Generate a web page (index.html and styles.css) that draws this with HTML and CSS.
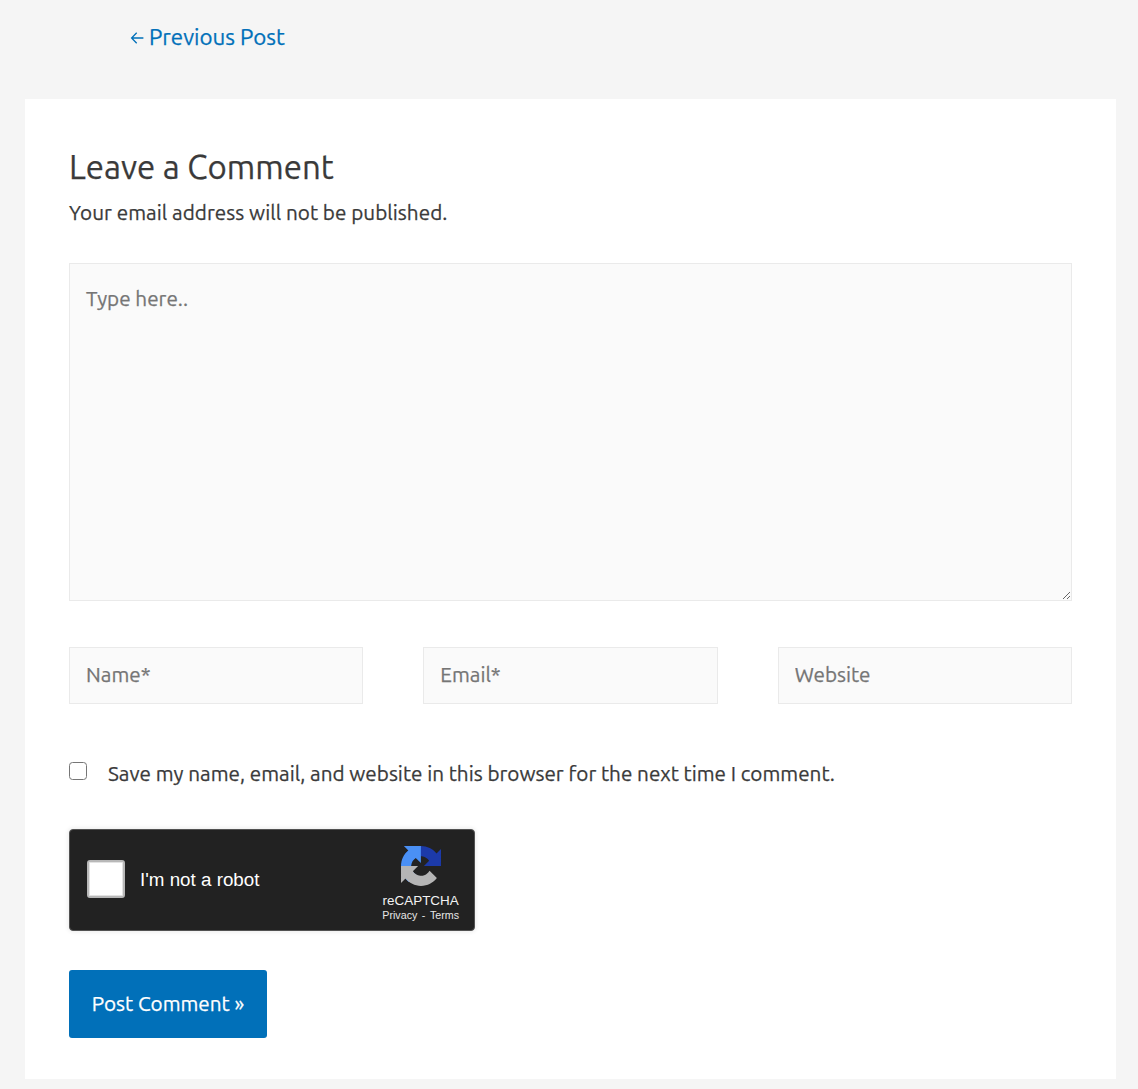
FILE: index.html
```html
<!DOCTYPE html>
<html lang="en">
<head>
<meta charset="utf-8">
<title>Leave a Comment</title>
<link rel="stylesheet" href="styles.css">
</head>
<body>
<nav class="post-nav">
  <a class="prev-link" href="#">
    <svg class="arrow" viewBox="0 0 14 14" width="14" height="14"><path d="M13.4 7H1.8M6.7 1.8 1.6 7l5.1 5.2" fill="none" stroke="currentColor" stroke-width="1.3"/></svg>
    <span class="prev-text">Previous Post</span>
  </a>
</nav>
<main class="respond">
  <h3 class="title">Leave a Comment</h3>
  <p class="notes"><span class="notes-text">Your email address will not be published.</span></p>
  <form class="comment-form">
    <textarea class="field message" placeholder="Type here.."></textarea>
    <div class="author-fields">
      <input class="field name" type="text" placeholder="Name*">
      <input class="field email" type="text" placeholder="Email*">
      <input class="field website" type="text" placeholder="Website">
    </div>
    <label class="consent">
      <input class="consent-box" type="checkbox">
      <span class="consent-text">Save my name, email, and website in this browser for the next time I comment.</span>
    </label>
    <div class="captcha">
      <span class="captcha-box"></span>
      <span class="captcha-label">I'm not a robot</span>
      <div class="captcha-brand">
        <svg class="captcha-logo" viewBox="0 0 64 64" width="40" height="40">
          <path fill="#1c3aa9" d="M64 31.955l-.033-1.37V4.687l-7.16 7.16C50.948 4.674 42.033.093 32.05.093c-10.4 0-19.622 4.96-25.458 12.64l11.736 11.86a15.55 15.55 0 0 1 4.754-5.334c2.05-1.6 4.952-2.906 8.968-2.906.485 0 .86.057 1.135.163 4.976.393 9.288 3.14 11.828 7.124l-8.307 8.307L64 31.953"/>
          <path fill="#4a90f5" d="M31.862.094l-1.37.033H4.594l7.16 7.16C4.58 13.147 0 22.06 0 32.046c0 10.4 4.96 19.622 12.64 25.458L24.5 45.768a15.55 15.55 0 0 1-5.334-4.754c-1.6-2.05-2.906-4.952-2.906-8.968 0-.485.057-.86.163-1.135.393-4.976 3.14-9.288 7.124-11.828l8.307 8.307L31.86.095"/>
          <path fill="#b5b5b5" d="M.001 32.045l.033 1.37v25.898l7.16-7.16c5.86 7.173 14.774 11.754 24.76 11.754 10.4 0 19.622-4.96 25.458-12.64l-11.736-11.86a15.55 15.55 0 0 1-4.754 5.334c-2.05 1.6-4.952 2.906-8.968 2.906-.485 0-.86-.057-1.135-.163-4.976-.393-9.288-3.14-11.828-7.124l8.307-8.307c-10.522.04-22.4.066-27.295-.005"/>
        </svg>
        <span class="brand-name">reCAPTCHA</span>
        <span class="brand-links"><span>Privacy</span><span>-</span><span>Terms</span></span>
      </div>
    </div>
    <button class="submit" type="button"><span>Post Comment »</span></button>
  </form>
</main>
</body>
</html>
```

FILE: styles.css
```css
* { box-sizing: border-box; }
body {
  margin: 0;
  height: 1089px;
  overflow: hidden;
  background: #f5f5f5;
  color: #3a3a3a;
  font: 20.7px/30px Ubuntu, "Noto Sans", sans-serif;
  -webkit-text-stroke-width: .25px;
}
.post-nav { height: 99px; padding: 20px 0 0 130px; }
.prev-link {
  display: inline-flex;
  align-items: center;
  gap: 5px;
  height: 34px;
  color: #0170b9;
  font-size: 22.35px;
  text-decoration: none;
  white-space: nowrap;
}
.arrow { margin-top: 1px; }
.respond {
  width: 1091px;
  height: 980px;
  margin-left: 25px;
  padding: 46px 44px 0;
  background: #fff;
}
.title { margin: 0; height: 44px; font-size: 33px; line-height: 44px; font-weight: 400; white-space: nowrap; }
.notes { margin: 9px 0 0; height: 30px; letter-spacing: .035px; white-space: nowrap; }
.comment-form { display: flex; flex-direction: column; align-items: flex-start; padding-top: 35px; }
.field {
  display: block;
  border: 1px solid #eaeaea;
  background: #fafafa;
  color: #666;
  font: inherit;
  outline: none;
}
.field::placeholder { color: #757575; opacity: 1; }
.message { width: 1003px; height: 338px; padding: 20px 16px; resize: vertical; -webkit-text-stroke-width: .25px; }
.author-fields {
  display: grid;
  grid-template-columns: repeat(3, 1fr);
  gap: 60px;
  width: 1003px;
  margin-top: 46px;
}
.author-fields .field { width: 100%; height: 57px; padding: 0 16px 3px; }
.consent { display: flex; height: 30px; margin-top: 55px; white-space: nowrap; }
.consent-box {
  width: 18px;
  height: 18px;
  margin: 3px 21px 0 0;
  appearance: none;
  border: 1.5px solid #767676;
  border-radius: 3.5px;
  background: #fff;
}
.consent-box:checked { background: #0170b9; }
.captcha {
  display: flex;
  align-items: center;
  width: 405.5px;
  height: 102px;
  margin-top: 40px;
  padding: 0 14.5px 0 17px;
  border: 1px solid #525252;
  border-radius: 4px;
  background: #222;
  box-shadow: 0 0 4px 1px rgba(0, 0, 0, .08);
  color: #fff;
  font-family: "Liberation Sans", Arial, sans-serif;
  -webkit-text-stroke-width: 0;
}
.captcha-box {
  width: 38px;
  height: 38px;
  margin-top: -3px;
  border: 2px solid #b8b8b8;
  border-radius: 3px;
  background: #fff;
  box-shadow: inset 0 0 0 1px #e3e3e3;
}
.captcha-label { margin-left: 15px; font-size: 18.8px; }
.captcha-brand { display: flex; flex-direction: column; align-items: center; margin-left: auto; padding-top: 7px; }
.captcha-logo { margin-bottom: 7px; }
.brand-name { color: #f2f2f2; font-size: 13.45px; line-height: 16px; }
.brand-links { display: flex; gap: 4.5px; color: #e6e6e6; font-size: 10.7px; line-height: 13px; }
.submit {
  width: 198px;
  height: 68px;
  margin-top: 39px;
  padding: 0;
  border: 0;
  border-radius: 3px;
  background: #0170b9;
  color: #fff;
  font: inherit;
  white-space: nowrap;
}
```
